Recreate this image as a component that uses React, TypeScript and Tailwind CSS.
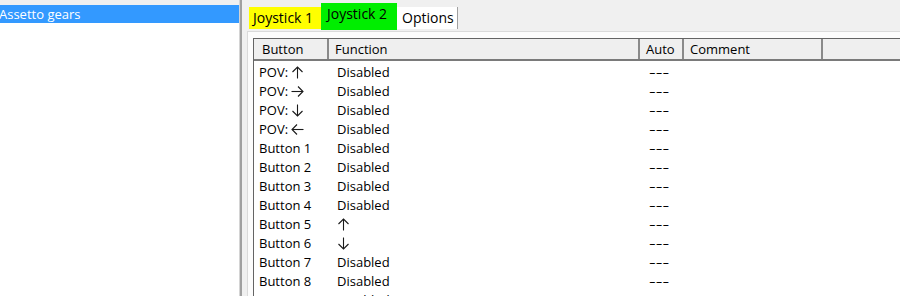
import React from "react";

const Arrow: React.FC<{ dir: "up" | "down" | "left" | "right" }> = ({ dir }) => {
  const rot = { up: 0, right: 90, down: 180, left: 270 }[dir];
  return (
    <svg width="13" height="13" viewBox="0 0 13 13" className="inline-block align-[-2px]">
      <g transform={`rotate(${rot} 6.5 6.5)`} stroke="#1a1a1a" strokeWidth="1.1" fill="none">
        <path d="M6.5 1 V12.5" />
        <path d="M1.5 6 L6.5 1 L11.5 6" />
      </g>
    </svg>
  );
};

const rows: [React.ReactNode, React.ReactNode][] = [
  [<>POV: <Arrow dir="up" /></>, "Disabled"],
  [<>POV: <Arrow dir="right" /></>, "Disabled"],
  [<>POV: <Arrow dir="down" /></>, "Disabled"],
  [<>POV: <Arrow dir="left" /></>, "Disabled"],
  ["Button 1", "Disabled"],
  ["Button 2", "Disabled"],
  ["Button 3", "Disabled"],
  ["Button 4", "Disabled"],
  ["Button 5", <Arrow dir="up" />],
  ["Button 6", <Arrow dir="down" />],
  ["Button 7", "Disabled"],
  ["Button 8", "Disabled"],
  ["", "Disabled"],
];

const App: React.FC = () => {
  return (
    <div
      className="flex w-[900px] h-[296px] overflow-hidden bg-[#f0f0f0] text-[13px] text-black"
      style={{ fontFamily: '"Open Sans", "DejaVu Sans", sans-serif' }}
    >
      {/* profile list */}
      <div className="w-[239px] shrink-0 h-full bg-white border-t-[5px] border-[#f0f0f0]">
        <div className="h-[18px] bg-[#3399ff] text-white leading-[18px] -ml-px">Assetto gears</div>
      </div>
      <div className="w-px shrink-0 h-full bg-[#d4d4d4]" />
      <div className="w-[2px] shrink-0 h-full bg-[#a0a0a0]" />

      {/* tab control */}
      <div className="flex flex-col flex-1 min-w-0 h-full pl-[5px]">
        <div className="flex items-end h-[31px] shrink-0 pl-[2px] text-[14px]">
          <div className="w-[72px] h-[22px] mb-[2px] pl-[4px] bg-[#ffff00] leading-[21px]">Joystick 1</div>
          <div className="w-[76px] h-[27px] mb-px pl-[6px] bg-[#00ee00] leading-[22px]">Joystick 2</div>
          <div className="w-[61px] h-[22px] mb-[2px] pl-[5px] bg-white border-r border-[#a0a0a0] leading-[21px]">
            Options
          </div>
        </div>
        <div className="flex-1 min-h-0 overflow-hidden bg-[#fcfcfc] border-t border-l border-[#dadada] pl-[5px] pt-[6px]">
          <div className="h-full bg-white border-t border-l border-[#646464]">
            {/* header */}
            <div className="flex h-[22px] bg-[#efefef] border-b-2 border-[#7a7a7a] leading-[21px]">
              <div className="w-[75px] pl-[8px] border-r-2 border-[#8a8a8a]">Button</div>
              <div className="w-[311px] pl-[6px] border-r-2 border-[#8a8a8a]">Function</div>
              <div className="w-[44px] pl-[6px] border-r-2 border-[#8a8a8a]">Auto</div>
              <div className="w-[139px] pl-[6px] border-r-2 border-[#8a8a8a]">Comment</div>
              <div className="flex-1" />
            </div>
            {/* rows */}
            <div className="pt-[2px]">
              {rows.map(([btn, fn], i) => (
                <div key={i} className="flex h-[19px] leading-[19px]">
                  <div className="w-[77px] pl-[5px] whitespace-nowrap">{btn}</div>
                  <div className="w-[313px] pl-[6px] whitespace-nowrap">{fn}</div>
                  <div className="w-[46px] pl-[5px] whitespace-nowrap">
                    <span className="inline-block origin-left scale-x-[1.6]">---</span>
                  </div>
                  <div className="flex-1" />
                </div>
              ))}
            </div>
          </div>
        </div>
      </div>
    </div>
  );
};

export default App;
